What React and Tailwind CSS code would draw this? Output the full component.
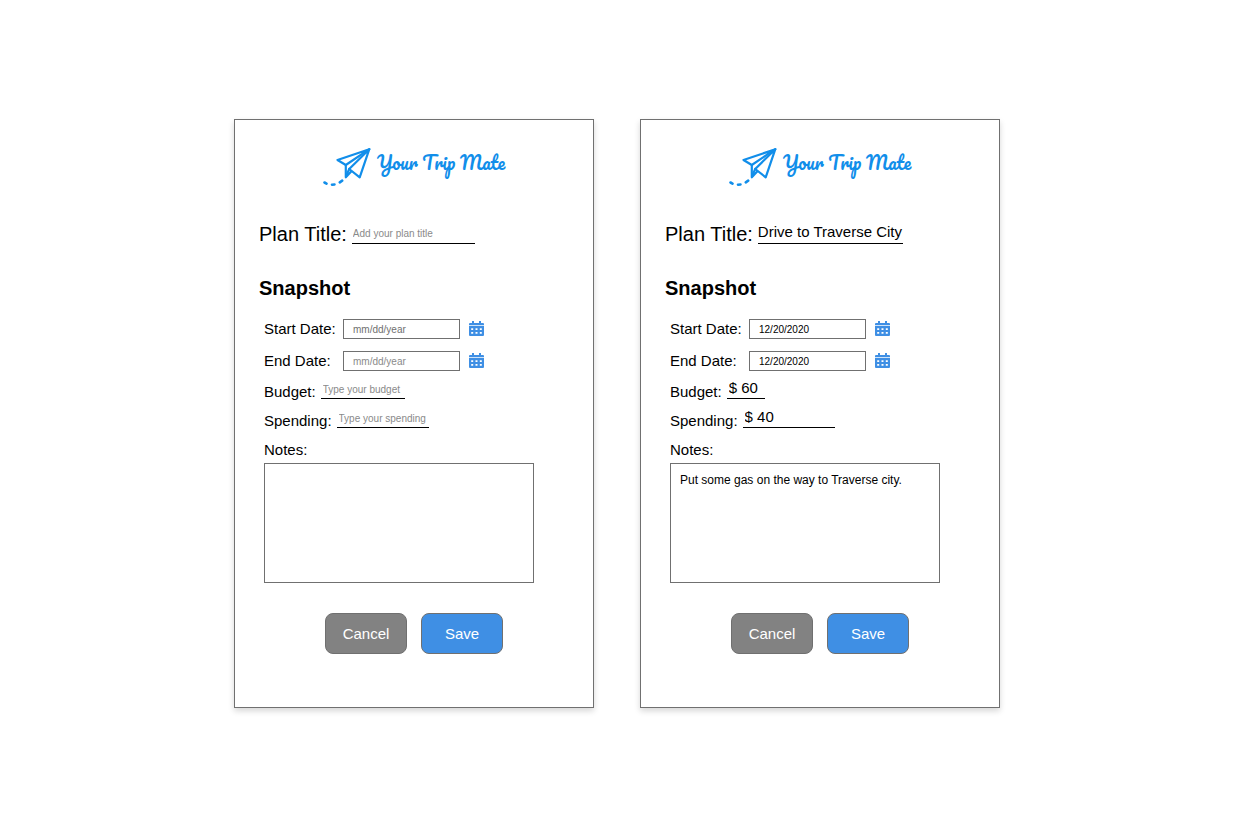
import { useId } from 'react';

const plans = [
  {
    name: 'empty',
    titleWidth: 'w-[123px]',
    budgetWidth: 'w-[84px]',
  },
  {
    name: 'filled',
    title: 'Drive to Traverse City',
    startDate: '12/20/2020',
    endDate: '12/20/2020',
    budget: '$ 60',
    spending: '$ 40',
    notes: 'Put some gas on the way to Traverse city.',
    titleWidth: 'w-[145px]',
    budgetWidth: 'w-[38px]',
  },
];

function Logo() {
  return (
    <div className="flex h-[38px] items-start justify-center gap-1.5 text-[#118eea]">
      <svg
        width="48"
        height="38"
        viewBox="0 0 48 38"
        fill="none"
        stroke="currentColor"
        strokeWidth="2.2"
        strokeLinejoin="round"
        strokeLinecap="round"
        aria-hidden="true"
      >
        <path d="M46.3 1.2 L14.5 12 L22.8 17 Z" />
        <path d="M22.8 17 V29.3 L28.2 23.5" />
        <path d="M46.3 1.2 L26.2 21 L36.7 29.3 Z" />
        <path d="M26.2 21 L23.2 28" />
        <path d="M1.5 34.5 L3.5 35.6 M9 36.7 L11.5 36.5 M16.8 34.3 L19.2 32.7" strokeWidth="2.6" />
      </svg>
      <span className="font-[Pacifico,Lato,sans-serif] text-[18px] leading-[30px] whitespace-nowrap">
        Your Trip Mate
      </span>
    </div>
  );
}

function CalendarIcon() {
  return (
    <svg width="15" height="15" viewBox="0 0 15 15" fill="#3f8fe4" aria-hidden="true">
      <path d="M3 0h2v2h5V0h2v2h2a1 1 0 0 1 1 1v1.2H0V3a1 1 0 0 1 1-1h2z" />
      <path
        fillRule="evenodd"
        d="M0 5h15v9a1 1 0 0 1-1 1H1a1 1 0 0 1-1-1zM2.2 7.2v1.8h2V7.2zM6.5 7.2v1.8h2V7.2zM10.8 7.2v1.8h2V7.2zM2.2 11v1.8h2V11zM6.5 11v1.8h2V11zM10.8 11v1.8h2V11z"
      />
    </svg>
  );
}

function LineField({ label, value, placeholder, width }) {
  const id = useId();

  return (
    <div className="flex h-[26px] items-start gap-[5px]">
      <label htmlFor={id} className="text-[15px] leading-[26px]">{label}</label>
      <input
        id={id}
        type="text"
        defaultValue={value}
        placeholder={placeholder}
        className={`h-5 border-b border-black pl-0.5 text-[15px] outline-none placeholder:text-[#8a8a8a]
                   placeholder-shown:pt-0.5 placeholder-shown:text-[10px] ${width}`}
      />
    </div>
  );
}

function DateField({ label, value, placeholderColor }) {
  const id = useId();

  return (
    <div className="flex items-start">
      <label htmlFor={id} className="w-[79px] text-[15px] leading-5">{label}</label>
      <input
        id={id}
        type="text"
        defaultValue={value}
        placeholder="mm/dd/year"
        className={`h-5 w-[117px] border border-[#707070] px-[9px] text-[10px] outline-none ${placeholderColor}`}
      />
      <button type="button" aria-label={`Pick ${label}`} className="ml-[9px] pt-0.5">
        <CalendarIcon />
      </button>
    </div>
  );
}

function PlanForm({ plan }) {
  const titleId = useId();
  const notesId = useId();

  return (
    <form
      className="w-[360px] max-w-full border border-[#707070] bg-white px-6 pt-7 pb-[53px] shadow-[0_3px_6px_rgba(0,0,0,0.16)]"
    >
      <Logo />

      <div className="mt-[34px] flex h-7 items-start gap-[5px]">
        <label htmlFor={titleId} className="text-[20px] leading-7">Plan Title:</label>
        <input
          id={titleId}
          type="text"
          defaultValue={plan.title}
          placeholder="Add your plan title"
          className={`h-6 border-b border-black text-[15px] outline-none placeholder:text-[#8a8a8a]
                     placeholder-shown:pt-1 placeholder-shown:pl-px placeholder-shown:text-[10px] ${plan.titleWidth}`}
        />
      </div>

      <h2 className="mt-7 text-[20px] leading-6 font-bold">Snapshot</h2>

      <div className="pl-[5px]">
        <div className="mt-[19px] flex flex-col gap-3">
          <DateField label="Start Date:" value={plan.startDate} placeholderColor="placeholder:text-[#707070]" />
          <DateField label="End Date:" value={plan.endDate} placeholderColor="placeholder:text-[#8a8a8a]" />
        </div>
        <div className="mt-2 flex flex-col gap-[3px]">
          <LineField label="Budget:" value={plan.budget} placeholder="Type your budget" width={plan.budgetWidth} />
          <LineField label="Spending:" value={plan.spending} placeholder="Type your spending" width="w-[92px]" />
        </div>
        <label htmlFor={notesId} className="mt-1.5 block text-[15px] leading-5">Notes:</label>
        <textarea
          id={notesId}
          defaultValue={plan.notes}
          className="mt-[3px] block h-[120px] w-[270px] resize-none border border-[#707070] px-[9px] py-2 text-xs leading-4 outline-none"
        />
      </div>

      <div className="mt-[30px] flex justify-center gap-3.5 text-[15px] text-white">
        <button type="button" className="h-[41px] w-[82px] rounded-lg border border-[#707070] bg-[#828282] pt-0.5">
          Cancel
        </button>
        <button type="button" className="h-[41px] w-[82px] rounded-lg border border-[#707070] bg-[#3f8fe4] pt-0.5">
          Save
        </button>
      </div>
    </form>
  );
}

export default function App() {
  return (
    <main className="flex min-h-screen flex-wrap items-center justify-center gap-[46px] bg-white font-['Liberation_Sans',Arial,sans-serif] text-black">
      {plans.map((plan) => (
        <PlanForm key={plan.name} plan={plan} />
      ))}
    </main>
  );
}
